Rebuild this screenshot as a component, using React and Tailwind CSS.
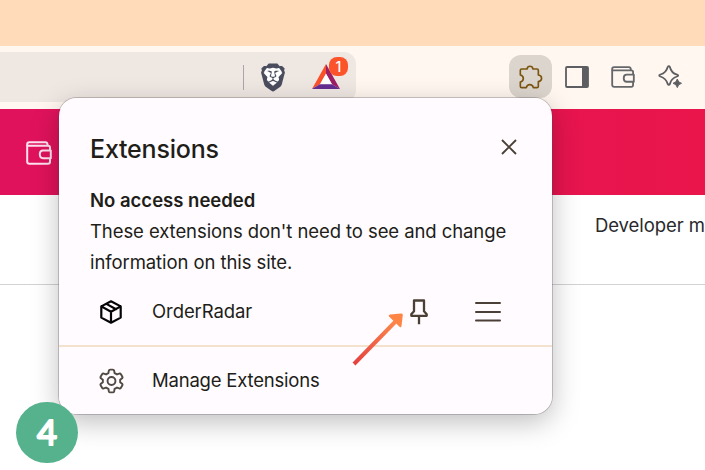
import { SiBrave } from "react-icons/si";

const sans = "font-['Inter','Liberation_Sans',sans-serif]";

function Wallet({ className }) {
  return (
    <svg className={className} viewBox="0 0 26 24" fill="none" stroke="currentColor" strokeWidth="2" strokeLinejoin="round">
      <path d="M24 9V6.6Q24 4.7 22 4.7H1.2V20.5Q1.2 22.8 3.5 22.8H22Q24 22.8 24 20.5V17.5" />
      <path d="M1.2 5V3.2Q1.2 1.2 3.3 1.2H19.5Q21.6 1.2 21.6 4.5" />
      <path d="M24.8 9.4H17Q13.8 9.4 13.8 13.3T17 17.2H24.8Z" />
    </svg>
  );
}

function Puzzle() {
  return (
    <svg className="h-[26px] w-[26px]" viewBox="0 0 78 78" fill="none" stroke="#7b5510" strokeWidth="5" strokeLinejoin="round">
      <path d="M13 15H27C29 4 43 4 45 15H57Q61 15 61 19V33C74 35 74 50 61 53V67Q61 71 57 71H46C43 59 28 59 25 71H11Q7 71 7 67V54C19 51 19 36 7 33V19Q7 15 11 15Z" />
    </svg>
  );
}

function Triangle() {
  return (
    <svg className="h-[26px] w-[28px]" viewBox="0 0 28 26">
      <path d="M14 0L0 25L8.3 20L14 10Z" fill="#f9522b" />
      <path d="M14 0L28 25L19.7 20L14 10Z" fill="#9e1f63" />
      <path d="M0 25H28L19.7 20H8.3Z" fill="#662d91" />
      <path d="M14 9.5L8 20.3H20Z" fill="#fff" />
    </svg>
  );
}

function Popup() {
  return (
    <section className="absolute left-[59px] top-[98px] flex h-[316px] w-[493px] flex-col overflow-hidden rounded-[18px] bg-[#fffbff] text-[#211d18]">
      <header className="flex h-[87px] items-start justify-between pl-[31px] pr-[35px]">
        <h1 className="mt-[33px] text-[25px] font-medium leading-[36px] tracking-[-0.2px]">Extensions</h1>
        <svg className="mt-[41px] h-4 w-4" viewBox="0 0 16 16" stroke="#494035" strokeWidth="1.9">
          <path d="M1 1L15 15M15 1L1 15" />
        </svg>
      </header>
      <div className="flex h-[92px] flex-col pl-[31px] text-[18.5px] leading-[31px]">
        <h2 className="h-[31px] whitespace-nowrap font-semibold">No access needed</h2>
        <p className="whitespace-nowrap tracking-[-0.08px]">These extensions don't need to see and change<br />information on this site.</p>
      </div>
      <div className="flex h-[68px] items-center pl-[40px] pr-[51px] pt-[1px] text-[18.5px]">
        <svg className="h-6 w-6" viewBox="0 0 24 24" fill="none" stroke="#050505" strokeWidth="2.2" strokeLinejoin="round" strokeLinecap="round">
          <path d="M12 1.3L21.7 6.4V17.6L12 22.7L2.3 17.6V6.4ZM2.3 6.4L12 11.8L21.7 6.4M12 11.8V22.7M7.4 3.9L17 9.2" />
        </svg>
        <span className="ml-[29px] mt-px w-[258px] tracking-[-0.08px]">OrderRadar</span>
        <svg className="h-[26px] w-[18px]" viewBox="0 0 18 26" fill="none" stroke="#4b4035" strokeWidth="2.3" strokeLinejoin="round">
          <path d="M4 1.5H14V12.2L16.7 15.3V16.8H1.3V15.3L4 12.2ZM9 17V25.3" />
        </svg>
        <svg className="ml-auto mt-px h-5 w-[26px]" viewBox="0 0 26 20" stroke="#4b4038" strokeWidth="2" strokeLinecap="round">
          <path d="M1 1H25M1 10H25M1 18.5H25" />
        </svg>
      </div>
      <div className="h-[2px] shrink-0 bg-[#f3e2cd]" />
      <div className="flex h-[67px] shrink-0 items-center pl-[40px] pt-px text-[18.5px]">
        <svg className="h-[26px] w-[25px]" viewBox="0 0 26 26" fill="none" stroke="#514a43" strokeWidth="2" strokeLinejoin="round">
          <path d="M11.7 1.2H14.3Q15.5 1.2 15.8 2.4L16.2 4.8L18.7 6.2L21 5.4Q22.2 5 22.8 6L24.2 8.4Q24.8 9.4 24 10.2L22 11.8V14.2L24 15.8Q24.8 16.6 24.2 17.6L22.8 20Q22.2 21 21 20.6L18.7 19.8L16.2 21.2L15.8 23.6Q15.5 24.8 14.3 24.8H11.7Q10.5 24.8 10.2 23.6L9.8 21.2L7.3 19.8L5 20.6Q3.8 21 3.2 20L1.8 17.6Q1.2 16.6 2 15.8L4 14.2V11.8L2 10.2Q1.2 9.4 1.8 8.4L3.2 6Q3.8 5 5 5.4L7.3 6.2L9.8 4.8L10.2 2.4Q10.5 1.2 11.7 1.2Z" />
          <circle cx="13" cy="13" r="4.1" />
        </svg>
        <span className="ml-[28px] tracking-[-0.2px]">Manage Extensions</span>
      </div>
    </section>
  );
}

export default function App() {
  return (
    <main className={`relative flex h-[470px] w-[705px] flex-col overflow-hidden bg-white ${sans}`}>
      <div className="h-[46px] bg-[#ffdbba]" />
      <div className="flex h-[63px] bg-[#fff7f0] pt-[6px]">
        <div className="flex h-[50px] w-[356px] items-center rounded-r-xl bg-[#efe7e2] pl-[243px]">
          <div className="h-[25px] w-px bg-[#aaa6a5]" />
          <div className="relative ml-[15px] flex h-[29px] w-[28px] items-center justify-center">
            <div className="absolute left-[6px] top-[5px] h-[19px] w-[16px] rounded-b-full bg-white" />
            <SiBrave className="relative h-[29px] w-[29px] text-[#494d5e]" />
          </div>
          <div className="relative ml-[25px] flex h-[26px] w-[28px]">
            <Triangle />
            <span className="absolute left-[17px] top-[-7px] flex h-[19px] w-[19px] items-center justify-center rounded-[8px] bg-[#fb542b] text-[14px] font-medium text-white">1</span>
          </div>
        </div>
        <div className="ml-[153px] mt-[3px] flex h-[43px] w-[43px] items-center justify-center rounded-xl bg-[#dcd5ce]">
          <Puzzle />
        </div>
        <svg className="ml-[13px] mt-[14px] h-[22px] w-[24px]" viewBox="0 0 24 22">
          <rect x="1" y="1" width="22" height="20" rx="1" fill="none" stroke="#5c5e62" strokeWidth="1.8" />
          <path d="M17 1H23V21H17Z" fill="#5c5e62" />
        </svg>
        <Wallet className="ml-[22px] mt-[14px] h-[22px] w-[24px] text-[#66676a]" />
        <svg className="ml-[22px] mt-[12px] h-[26px] w-[26px]" viewBox="0 0 26 26">
          <path d="M10.6 3.2Q11.8 1.2 13 3.2Q14.3 9 20 10.6Q22.4 11.5 20 12.5Q14.3 14.3 13 19.8Q11.8 22 10.6 19.8Q9 14.2 3.4 12.5Q1 11.5 3.4 10.5Q9.2 8.7 10.6 3.2Z" fill="none" stroke="#5c5e62" strokeWidth="1.8" strokeLinejoin="round" />
          <path d="M20.3 15Q21 18.6 24.5 19.3Q21 20 20.3 23.6Q19.6 20 16 19.3Q19.6 18.6 20.3 15Z" fill="#5c5e62" stroke="#5c5e62" strokeLinejoin="round" />
        </svg>
      </div>
      <div className="flex h-[86px] bg-gradient-to-r from-[#e0125c] to-[#e9154b] pl-[25px] pt-[32px]">
        <Wallet className="h-6 w-[28px] text-[#ffe1ef]" />
      </div>
      <div className="flex h-[90px] border-b border-[#d2d2d5] pl-[595px] pt-[15px]">
        <span className="whitespace-nowrap text-[18.5px] leading-[30px] tracking-[-0.08px] text-[#29292b]">Developer m</span>
      </div>
      <div className="absolute left-[59px] top-[98px] h-[316px] w-[493px] rounded-[18px] shadow-[0_0_0_1px_rgba(80,70,80,0.28),0_8px_28px_rgba(0,0,0,0.26)]" />
      <Popup />
      <svg className="absolute left-[350px] top-[310px] h-[58px] w-[56px]" viewBox="0 0 56 58">
        <defs>
          <linearGradient id="arrow" gradientUnits="userSpaceOnUse" x1="4" y1="54" x2="50" y2="6">
            <stop stopColor="#e4403f" />
            <stop offset="1" stopColor="#ff914d" />
          </linearGradient>
        </defs>
        <path d="M4 54L46 11" stroke="url(#arrow)" strokeWidth="4" />
        <path d="M40 4.5L51 3.5Q53 3.3 52.8 5L51.5 16Q51 18 49.5 16.7L39 6.5Q38 5 40 4.5Z" fill="#ff8547" />
      </svg>
      <div className="absolute left-4 top-[402px] h-[61px] w-[62px] rounded-full bg-[#55b28c]">
        <svg className="h-[61px] w-[62px]" viewBox="0 0 62 61">
          <text x="31" y="43" textAnchor="middle" className="font-['Lato',sans-serif] text-[34.5px] font-normal" fill="#fff" stroke="#fff" strokeWidth="2" strokeLinejoin="round">4</text>
        </svg>
      </div>
    </main>
  );
}
